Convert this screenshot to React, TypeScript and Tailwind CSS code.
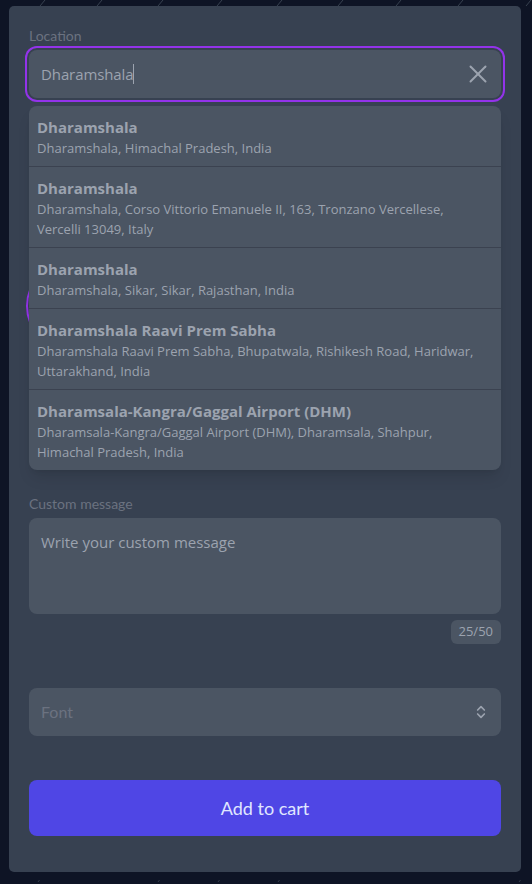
import React from "react";
import { X, ChevronsUpDown } from "lucide-react";

const ui = { fontFamily: '"Open Sans", "Noto Sans", sans-serif' };
const round = { fontFamily: 'Lato, "Noto Sans", sans-serif' };

const places = [
  { title: "Dharamshala", sub: "Dharamshala, Himachal Pradesh, India" },
  {
    title: "Dharamshala",
    sub: "Dharamshala, Corso Vittorio Emanuele II, 163, Tronzano Vercellese, Vercelli 13049, Italy",
  },
  { title: "Dharamshala", sub: "Dharamshala, Sikar, Sikar, Rajasthan, India" },
  {
    title: "Dharamshala Raavi Prem Sabha",
    sub: "Dharamshala Raavi Prem Sabha, Bhupatwala, Rishikesh Road, Haridwar, Uttarakhand, India",
  },
  {
    title: "Dharamsala-Kangra/Gaggal Airport (DHM)",
    sub: "Dharamsala-Kangra/Gaggal Airport (DHM), Dharamsala, Shahpur, Himachal Pradesh, India",
  },
];

// faint streaks scattered over the night backdrop
const streaksTop = [40, 97, 158, 217, 277, 338, 396, 458, 526];
const streaksBottom = [38, 158, 218, 278, 519];

function Backdrop() {
  return (
    <svg className="pointer-events-none absolute inset-0" width="532" height="884">
      {streaksTop.map((x) => (
        <line key={"t" + x} x1={x} y1={6} x2={x + 5} y2={0} stroke="#4b5563" strokeWidth="1" opacity="0.7" />
      ))}
      {streaksBottom.map((x) => (
        <line key={"b" + x} x1={x} y1={882} x2={x + 1.5} y2={880} stroke="#4b5563" strokeWidth="1" opacity="0.6" />
      ))}
    </svg>
  );
}

export default function App() {
  return (
    <div className="relative min-h-[884px] w-full bg-[#0e1425] pt-[6px] pl-[9px]">
      <Backdrop />
      <div className="relative w-[512px] rounded-[5px] bg-[#374151] px-5 pt-5 pb-9">
        {/* Location search */}
        <div className="relative z-10">
          <div className="h-5 text-sm leading-5 text-[#6b7280]" style={round}>
            Location
          </div>
          <div
            className="mt-1 flex h-12 items-center rounded-lg bg-[#4b5563] pl-3 pr-2 ring-2 ring-[#9333ea] ring-offset-2 ring-offset-[#374151]"
            style={ui}
          >
            <span className="text-[15px] tracking-[-0.1px] text-[#9ca3af]">Dharamshala</span>
            <span className="h-5 w-px bg-[#9ca3af]" />
            <span className="flex-1" />
            <X size={30} strokeWidth={1.6} className="text-[#9ca3af]" />
          </div>
          <div
            className="absolute left-0 right-0 top-full mt-2 overflow-hidden rounded-lg bg-[#4b5563] shadow-lg"
            style={ui}
          >
            {places.map((p, i) => (
              <div
                key={i}
                className={
                  "pl-2 pr-5 pt-2.5 pb-2 text-[#9ca3af] " + (i > 0 ? "border-t border-[#3b4250]" : "")
                }
              >
                <div className="text-[15px] font-bold leading-[22px]">{p.title}</div>
                <div className="text-[13px] leading-5">{p.sub}</div>
              </div>
            ))}
          </div>
        </div>

        {/* swatch row hidden beneath the suggestions */}
        <div className="mt-[164px] -ml-[3px] h-[88px] w-[88px] rounded-full border-2 border-[#9333ea]" />

        {/* Custom message */}
        <div className="mt-[144px] h-5 text-sm leading-5 text-[#6b7280]" style={round}>
          Custom message
        </div>
        <div className="mt-1 h-24 rounded-lg bg-[#4b5563] px-3 pt-3" style={ui}>
          <span className="text-[15px] leading-6 text-[#9ca3af]">Write your custom message</span>
        </div>
        <div className="mt-1.5 flex justify-end">
          <div className="flex h-6 items-center rounded-md bg-[#4b5563] px-2 text-[13px] text-[#9ca3af]" style={ui}>
            25/50
          </div>
        </div>

        {/* Font select */}
        <div className="mt-11 flex h-12 items-center justify-between rounded-lg bg-[#4b5563] pl-3 pr-3">
          <span className="text-base text-[#6b7280]" style={round}>
            Font
          </span>
          <ChevronsUpDown size={16} strokeWidth={2.5} className="text-[#9ca3af]" />
        </div>

        <button
          className="mt-11 flex h-14 w-full items-center justify-center rounded-lg bg-[#4f46e5] text-lg text-[#e0e7ff]"
          style={round}
        >
          Add to cart
        </button>
      </div>
    </div>
  );
}
